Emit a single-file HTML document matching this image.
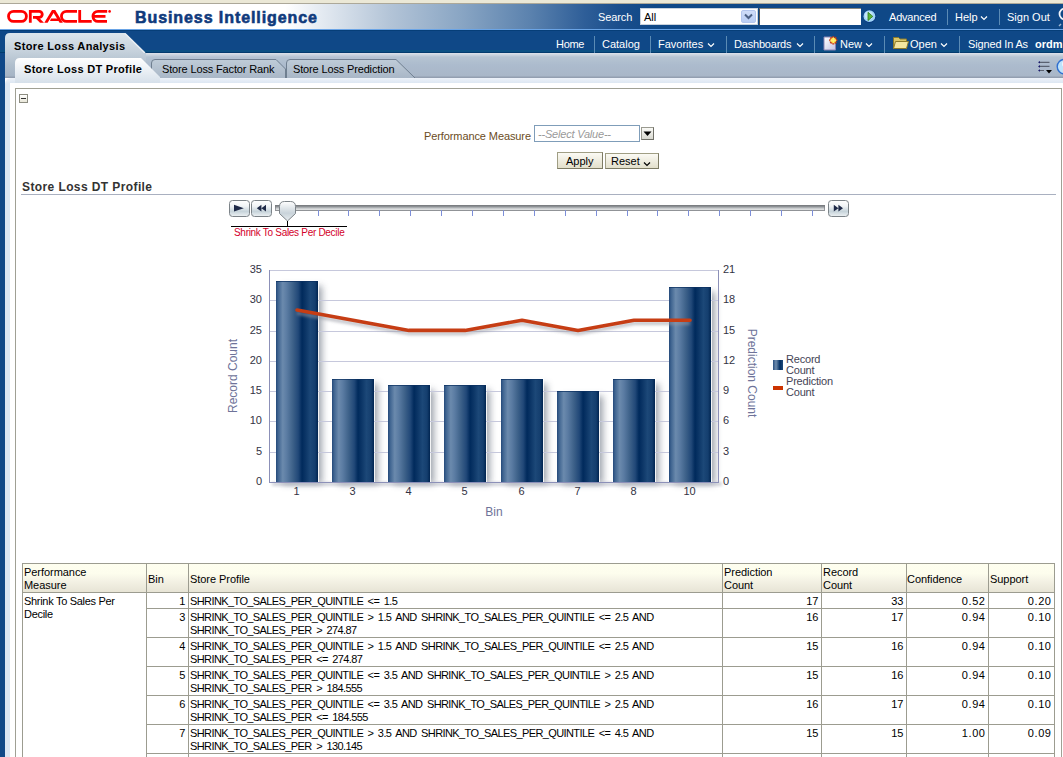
<!DOCTYPE html>
<html><head><meta charset="utf-8">
<style>
*{margin:0;padding:0;box-sizing:border-box}
html,body{width:1063px;height:757px;overflow:hidden;background:#fff;font-family:"Liberation Sans",sans-serif;font-size:11px;color:#000}
.a{position:absolute}
.wt{color:#fff;white-space:nowrap}
.t{line-height:13px;white-space:nowrap;letter-spacing:-0.3px}
.c{letter-spacing:-0.6px;word-spacing:2px}
.r{text-align:right}
#topstrip{left:0;top:0;width:1063px;height:3px;background:#ebe8d6}
#topline{left:0;top:3px;width:1063px;height:1px;background:#aca899}
#hdr{left:0;top:4px;width:1063px;height:25px;background:linear-gradient(90deg,#fff 0,#fff 285px,#e5ebf2 320px,#b3c4d7 390px,#8aa6c4 460px,#5b82ae 530px,#2e5e98 585px,#1a4e8c 620px,#0f4887 655px,#0f4887 100%)}
#bi{left:135px;top:8.5px;font-size:16px;font-weight:bold;color:#0f3a7c;letter-spacing:0.92px;white-space:nowrap;-webkit-text-stroke:0.6px #0f3a7c}
#nav{left:0;top:29px;width:1063px;height:24px;background:#0f4887;border-top:1px solid #6aa4e6}
#nav2{left:0;top:30px;width:1063px;height:1px;background:#063e78}
#nav3{left:0;top:50px;width:1063px;height:2px;background:#0b5083}
#nav4{left:0;top:52px;width:1063px;height:1px;background:#023c6e}
#tabbar{left:5px;top:53px;width:1058px;height:25px;background:linear-gradient(#dde3ea 0,#b5c4d2 4px,#acbbcd 12px,#a9b7c8 23px,#939fb0 24px)}
#tabbarL{left:5px;top:53px;width:141px;height:25px;background:linear-gradient(#c3cfda 0,#b0bfcd 12px,#a5b4c5 23px,#939fb0 24px)}
#leftblue{left:0;top:53px;width:5px;height:704px;background:#0f4887}
#strip{left:5px;top:78px;width:1058px;height:679px;background:linear-gradient(#edf2f9 0,#dde7f2 5px,#dae6f3 6px);border-top-left-radius:6px}
#white{left:10px;top:83px;width:1053px;height:674px;background:#fff}
#frame{left:15px;top:88px;width:1047px;height:680px;border:1px solid #a0a094}
</style></head><body>
<div class="a" id="topstrip"></div>
<div class="a" id="topline"></div>
<div class="a" id="hdr"></div>
<svg class="a" style="left:0;top:0" width="120" height="30" viewBox="0 0 120 30">
<g fill="none" stroke="#f00" stroke-width="2.8">
<rect x="8.5" y="11.3" width="17.9" height="10.1" rx="5.05"/>
<path d="M30.3 22.8V11.3H39.2A3.05 3.05 0 0 1 39.2 17.4H33"/>
<path d="M66.5 11.3H77M77 21.4H66.5A5.05 5.05 0 0 1 66.5 11.3"/>
<path d="M79.7 10V21.4H91.7"/>
<path d="M98 11.3H107.2M107 21.4H98A5.05 5.05 0 0 1 98 11.3M94 16.4H105.5"/>
</g>
<g fill="#f00">
<path d="M33.5 16.2L37.5 16.2L44 22.8L40 22.8Z"/>
<path d="M52 10L55.2 10L62.9 22.8L59.6 22.8L53.6 13L47.6 22.8L44.3 22.8Z"/>
<path d="M51 18.5L58 18.5L59.5 21L50 21Z"/>
<circle cx="109.6" cy="11.4" r="1.3"/>
</g>
</svg>
<div class="a" id="bi">Business Intelligence</div>
<div class="a" id="nav"></div>
<div class="a" id="nav2"></div>
<div class="a" id="nav3"></div>
<div class="a" id="nav4"></div>
<div class="a" id="tabbar"></div>
<div class="a" id="tabbarL"></div>
<div class="a" id="leftblue"></div>
<div class="a" id="strip"></div>
<div class="a" id="white"></div>
<div class="a" id="frame"></div>
<div class="a wt" style="left:598px;top:11px;letter-spacing:-0.1px">Search</div>
<div class="a" style="left:640px;top:8px;width:118px;height:17px;background:#fff;border:1px solid #c9d2dc"></div>
<div class="a" style="left:644px;top:11px;white-space:nowrap">All</div>
<div class="a" style="left:741px;top:10px;width:15px;height:13px;background:linear-gradient(#d0ddf8,#b9cdf4);border:1px solid #b4c6ee;border-radius:2px"></div>
<svg class="a" style="left:741px;top:10px" width="15" height="13"><path d="M4 4.5L7.5 8L11 4.5" fill="none" stroke="#4d6185" stroke-width="2"/></svg>
<div class="a" style="left:759px;top:8px;width:102px;height:17px;background:#fff;border-left:1px solid #555;border-top:1px solid #8a8a80"></div>
<svg class="a" style="left:862px;top:9px" width="16" height="16"><circle cx="7.6" cy="7.4" r="6.6" fill="#0a3a80"/><circle cx="7.4" cy="7.2" r="5.9" fill="#9fd3f7"/><circle cx="6.8" cy="6.4" r="4" fill="#c4e6fb"/><path d="M6 3.3L10.8 7.4L6 11.5Z" fill="#5cb83a" stroke="#2f7a1a" stroke-width="0.8" stroke-linejoin="round"/></svg>
<div class="a wt" style="left:889px;top:11px;letter-spacing:-0.2px">Advanced</div>
<div class="a" style="left:947px;top:9px;width:1px;height:16px;background:#5b8bb5"></div>
<div class="a wt" style="left:955px;top:11px">Help</div>
<svg class="a" style="left:980px;top:15px" width="8" height="6"><path d="M1 1.5L4 4.5L7 1.5" fill="none" stroke="#fff" stroke-width="1.2"/></svg>
<div class="a" style="left:999px;top:9px;width:1px;height:16px;background:#5b8bb5"></div>
<div class="a wt" style="left:1007px;top:11px">Sign Out</div>
<svg class="a" style="left:1058px;top:7px" width="5" height="20"><circle cx="7" cy="7" r="5.5" fill="none" stroke="#f0f4fa" stroke-width="1.8"/><path d="M3 17L1 19" stroke="#9fb6d0" stroke-width="1.5"/></svg>
<div class="a" style="left:5px;top:33px;width:141px;height:20px">
<svg width="141" height="20" style="position:absolute;left:0;top:0">
<defs><linearGradient id="tg1" x1="0" y1="0" x2="0" y2="1"><stop offset="0" stop-color="#dde6ed"/><stop offset="1" stop-color="#c3cfda"/></linearGradient></defs>
<path d="M0 20V5Q0 0 5 0H120L140 20Z" fill="url(#tg1)"/>
<path d="M120 0.5L140 20" stroke="#e9eef3" stroke-width="1.5" fill="none"/>
</svg>
<div class="a" style="left:9px;top:7px;font-weight:bold;letter-spacing:0.35px;white-space:nowrap;color:#000">Store Loss Analysis</div>
</div>
<div class="a wt" style="left:556px;top:38px;letter-spacing:-0.3px">Home</div>
<div class="a" style="left:594px;top:36px;width:1px;height:17px;background:#5b8bb5"></div>
<div class="a wt" style="left:602px;top:38px">Catalog</div>
<div class="a" style="left:650px;top:36px;width:1px;height:17px;background:#5b8bb5"></div>
<div class="a wt" style="left:658px;top:38px">Favorites</div>
<svg class="a" style="left:707px;top:42px" width="8" height="6"><path d="M1 1.5L4 4.5L7 1.5" fill="none" stroke="#fff" stroke-width="1.2"/></svg>
<div class="a" style="left:726px;top:36px;width:1px;height:17px;background:#5b8bb5"></div>
<div class="a wt" style="left:734px;top:38px;letter-spacing:-0.2px">Dashboards</div>
<svg class="a" style="left:796px;top:42px" width="8" height="6"><path d="M1 1.5L4 4.5L7 1.5" fill="none" stroke="#fff" stroke-width="1.2"/></svg>
<div class="a" style="left:814px;top:36px;width:1px;height:17px;background:#5b8bb5"></div>
<svg class="a" style="left:822px;top:34px" width="18" height="17"><defs><linearGradient id="npg" x1="0" y1="0" x2="1" y2="1"><stop offset="0" stop-color="#ffffff"/><stop offset="1" stop-color="#c4c4e4"/></linearGradient></defs><path d="M2 3H9.5L13.5 7V16H2Z" fill="url(#npg)" stroke="#8a84b4"/><path d="M11.3 2.2V10.4M7.2 6.3H15.4M8.4 3.4L14.2 9.2M14.2 3.4L8.4 9.2" stroke="#c83a10" stroke-width="2"/><circle cx="11.3" cy="6.3" r="2.6" fill="#ffe34a"/><path d="M11.3 3.3V9.3M8.3 6.3H14.3" stroke="#fff27a" stroke-width="1"/></svg>
<div class="a wt" style="left:840px;top:38px">New</div>
<svg class="a" style="left:865px;top:42px" width="8" height="6"><path d="M1 1.5L4 4.5L7 1.5" fill="none" stroke="#fff" stroke-width="1.2"/></svg>
<div class="a" style="left:884px;top:36px;width:1px;height:17px;background:#5b8bb5"></div>
<svg class="a" style="left:892px;top:35px" width="18" height="15"><path d="M1.5 2.5H6.5L8 4H14.5V13.5H1.5Z" fill="#d9c66a" stroke="#8c7a2a"/><path d="M3.5 6.5H16.5L14.5 13.5H1.5Z" fill="#f3e5a0" stroke="#8c7a2a"/></svg>
<div class="a wt" style="left:910px;top:38px">Open</div>
<svg class="a" style="left:940px;top:42px" width="8" height="6"><path d="M1 1.5L4 4.5L7 1.5" fill="none" stroke="#fff" stroke-width="1.2"/></svg>
<div class="a" style="left:959px;top:36px;width:1px;height:17px;background:#5b8bb5"></div>
<div class="a wt" style="left:968px;top:38px;letter-spacing:-0.15px">Signed In As</div>
<div class="a wt" style="left:1035px;top:38px;font-weight:bold">ordm</div>
<svg class="a" style="left:150px;top:58px" width="270" height="20">
<defs><linearGradient id="tg2" x1="0" y1="0" x2="0" y2="1"><stop offset="0" stop-color="#bfccd8"/><stop offset="1" stop-color="#a9b7c7"/></linearGradient></defs>
<path d="M1.5 20V5Q1.5 1.5 5 1.5H126L135.5 11V20" fill="url(#tg2)" stroke="#6f7f90" stroke-width="1"/>
<path d="M136.5 20V5Q136.5 1.5 140 1.5H246L265 20" fill="url(#tg2)" stroke="#6f7f90" stroke-width="1"/>
</svg>
<svg class="a" style="left:15px;top:58px" width="150" height="25">
<defs><linearGradient id="tg3" x1="0" y1="0" x2="0" y2="1"><stop offset="0" stop-color="#ffffff"/><stop offset="1" stop-color="#d6e0ea"/></linearGradient></defs>
<path d="M0 25V5Q0 0 5 0H126L145 19V25Z" fill="url(#tg3)"/>
</svg>
<svg class="a" style="left:1036px;top:59px" width="18" height="17"><g fill="#1a1a6a"><path d="M2 3.3L4 2V4.6Z"/><path d="M2 7.4L4 6.1V8.7Z"/><path d="M2 11.5L4 10.2V12.8Z"/></g><g stroke="#5a6270" stroke-width="1.2"><path d="M4 3.3H13.5M4 7.4H13.5M4 11.5H8"/></g><path d="M10 11H16L13 14.5Z" fill="#000"/></svg>
<svg class="a" style="left:1056px;top:58px" width="7" height="18"><circle cx="8.5" cy="8.6" r="7.3" fill="#bfe3fb" stroke="#2f6fd0" stroke-width="1.4"/><circle cx="9" cy="6" r="3" fill="#eef8ff"/></svg>
<div class="a" style="left:24px;top:63px;font-weight:bold;letter-spacing:0.3px;white-space:nowrap">Store Loss DT Profile</div>
<div class="a" style="left:162px;top:63px;letter-spacing:-0.15px;white-space:nowrap">Store Loss Factor Rank</div>
<div class="a" style="left:293px;top:63px;letter-spacing:-0.15px;white-space:nowrap">Store Loss Prediction</div>
<div class="a" style="left:19px;top:94px;width:9px;height:9px;border:1px solid #8c8c80;background:linear-gradient(#fff,#e8e6d8)"></div>
<div class="a" style="left:21px;top:98px;width:5px;height:1px;background:#333"></div>
<div class="a" style="left:424px;top:130px;color:#6b4c1e;letter-spacing:-0.1px;white-space:nowrap">Performance Measure</div>
<div class="a" style="left:534px;top:125px;width:106px;height:17px;border:1px solid #7f9db9;background:#fff"></div>
<div class="a" style="left:538px;top:128px;color:#9a9a9a;font-style:italic;letter-spacing:-0.2px;white-space:nowrap">--Select Value--</div>
<div class="a" style="left:641px;top:127px;width:13px;height:13px;border:1px solid #9a9a90;border-right-color:#707068;border-bottom-color:#707068;background:linear-gradient(#fafaf6,#d8d8d0)"></div>
<svg class="a" style="left:641px;top:127px" width="13" height="13"><path d="M2.5 4.5H10.5L6.5 9Z" fill="#000"/></svg>
<div class="a" style="left:557px;top:152px;width:46px;height:17px;border:1px solid #a09e84;border-right-color:#7d7b64;border-bottom-color:#7d7b64;background:linear-gradient(#fbfaf4,#e2dfcb)"></div>
<div class="a" style="left:566px;top:155px;white-space:nowrap">Apply</div>
<div class="a" style="left:605px;top:153px;width:54px;height:16px;border:1px solid #a09e84;border-right-color:#7d7b64;border-bottom-color:#7d7b64;background:linear-gradient(#fbfaf4,#e2dfcb)"></div>
<div class="a" style="left:611px;top:155px;white-space:nowrap">Reset</div>
<svg class="a" style="left:643px;top:161px" width="8" height="6"><path d="M1 1.5L4 4.5L7 1.5" fill="none" stroke="#000" stroke-width="1.2"/></svg>
<div class="a" style="left:22px;top:180px;font-size:12px;font-weight:bold;color:#333;letter-spacing:0.4px;white-space:nowrap">Store Loss DT Profile</div>
<div class="a" style="left:21px;top:194px;width:1035px;height:1px;background:#a9b0c0"></div>
<svg class="a" style="left:220px;top:196px" width="640" height="48">
<defs>
<linearGradient id="btn" x1="0" y1="0" x2="0" y2="1"><stop offset="0" stop-color="#ffffff"/><stop offset="0.35" stop-color="#f1f4f6"/><stop offset="0.68" stop-color="#c6d3da"/><stop offset="1" stop-color="#eef2f4"/></linearGradient>
<linearGradient id="trk" x1="0" y1="0" x2="0" y2="1"><stop offset="0" stop-color="#6e7276"/><stop offset="0.25" stop-color="#8c9094"/><stop offset="0.6" stop-color="#cdd0d2"/><stop offset="0.85" stop-color="#e6e7e8"/><stop offset="1" stop-color="#9a9ea2"/></linearGradient>
<linearGradient id="thm" x1="0" y1="0" x2="0" y2="1"><stop offset="0" stop-color="#ffffff"/><stop offset="0.6" stop-color="#c9d3da"/><stop offset="1" stop-color="#e8edf0"/></linearGradient>
</defs>
<rect x="9.5" y="4.5" width="20" height="16" rx="3" fill="url(#btn)" stroke="#7c8388"/>
<path d="M14 8.8L23.8 12.2L14 15.4Z" fill="#1f2a48"/>
<rect x="31.5" y="4.5" width="20" height="16" rx="3" fill="url(#btn)" stroke="#7c8388"/>
<path d="M36.8 12.2L41.4 8.8V15.4Z M41.4 12.2L46 8.8V15.4Z" fill="#1f2a48"/>
<rect x="55" y="9" width="550" height="6" fill="url(#trk)"/>
<rect x="55.5" y="9.5" width="549" height="5" fill="none" stroke="#7a7e82" stroke-width="1" opacity="0.7"/>
<rect x="98" y="14" width="1" height="6" fill="#7d8fd8"/><rect x="128" y="14" width="1" height="6" fill="#7d8fd8"/><rect x="159" y="14" width="1" height="6" fill="#7d8fd8"/><rect x="190" y="14" width="1" height="6" fill="#7d8fd8"/><rect x="221" y="14" width="1" height="6" fill="#7d8fd8"/><rect x="252" y="14" width="1" height="6" fill="#7d8fd8"/><rect x="283" y="14" width="1" height="6" fill="#7d8fd8"/><rect x="314" y="14" width="1" height="6" fill="#7d8fd8"/><rect x="345" y="14" width="1" height="6" fill="#7d8fd8"/><rect x="376" y="14" width="1" height="6" fill="#7d8fd8"/><rect x="407" y="14" width="1" height="6" fill="#7d8fd8"/><rect x="437" y="14" width="1" height="6" fill="#7d8fd8"/><rect x="468" y="14" width="1" height="6" fill="#7d8fd8"/><rect x="499" y="14" width="1" height="6" fill="#7d8fd8"/><rect x="530" y="14" width="1" height="6" fill="#7d8fd8"/><rect x="561" y="14" width="1" height="6" fill="#7d8fd8"/><rect x="592" y="14" width="1" height="6" fill="#7d8fd8"/>
<path d="M59.5 10.5Q59.5 5.5 64.5 5.5H70.5Q75.5 5.5 75.5 10.5V17.5L67.5 25L59.5 17.5Z" fill="url(#thm)" stroke="#7c8388"/>
<rect x="67" y="25" width="1" height="5" fill="#000"/>
<rect x="11" y="30" width="116" height="1" fill="#000"/>
<rect x="608.5" y="4.5" width="20" height="16" rx="3" fill="url(#btn)" stroke="#7c8388"/>
<path d="M613.8 8.8L618.4 12.2L613.8 15.4Z M618.4 8.8L623 12.2L618.4 15.4Z" fill="#1f2a48"/>
</svg>
<div class="a" style="left:234px;top:227px;font-size:10px;color:#d4002a;letter-spacing:-0.3px;white-space:nowrap">Shrink To Sales Per Decile</div>
<div class="a" style="left:22px;top:563px;width:1033px;height:30px;background:linear-gradient(#fefeef 0,#fdfded 35%,#f3f1e4 62%,#e6e3d4 100%)"></div>
<div class="a" style="left:22px;top:563px;width:1033px;height:1px;background:#9c9c90"></div>
<div class="a" style="left:22px;top:592px;width:1033px;height:1px;background:#9c9c90"></div>
<div class="a" style="left:146px;top:608px;width:909px;height:1px;background:#9c9c90"></div>
<div class="a" style="left:146px;top:637px;width:909px;height:1px;background:#9c9c90"></div>
<div class="a" style="left:146px;top:666px;width:909px;height:1px;background:#9c9c90"></div>
<div class="a" style="left:146px;top:695px;width:909px;height:1px;background:#9c9c90"></div>
<div class="a" style="left:146px;top:724px;width:909px;height:1px;background:#9c9c90"></div>
<div class="a" style="left:146px;top:753px;width:909px;height:1px;background:#9c9c90"></div>
<div class="a" style="left:22px;top:563px;width:1px;height:194px;background:#9c9c90"></div>
<div class="a" style="left:146px;top:563px;width:1px;height:194px;background:#9c9c90"></div>
<div class="a" style="left:188px;top:563px;width:1px;height:194px;background:#9c9c90"></div>
<div class="a" style="left:722px;top:563px;width:1px;height:194px;background:#9c9c90"></div>
<div class="a" style="left:821px;top:563px;width:1px;height:194px;background:#9c9c90"></div>
<div class="a" style="left:906px;top:563px;width:1px;height:194px;background:#9c9c90"></div>
<div class="a" style="left:988px;top:563px;width:1px;height:194px;background:#9c9c90"></div>
<div class="a" style="left:1054px;top:563px;width:1px;height:194px;background:#9c9c90"></div>
<div class="a t" style="left:24px;top:566px;letter-spacing:-0.05px">Performance<br>Measure</div>
<div class="a t" style="left:148px;top:573px;letter-spacing:-0.05px">Bin</div>
<div class="a t" style="left:190px;top:573px;letter-spacing:-0.05px">Store Profile</div>
<div class="a t" style="left:724px;top:566px;letter-spacing:-0.05px">Prediction<br>Count</div>
<div class="a t" style="left:823px;top:566px;letter-spacing:-0.05px">Record<br>Count</div>
<div class="a t" style="left:907px;top:573px;letter-spacing:-0.05px">Confidence</div>
<div class="a t" style="left:990px;top:573px;letter-spacing:-0.05px">Support</div>
<div class="a t" style="left:24px;top:595px">Shrink To Sales Per<br>Decile</div>
<div class="a t c" style="left:190px;top:595px">SHRINK_TO_SALES_PER_QUINTILE &lt;= 1.5</div>
<div class="a t r" style="right:878px;top:595px;">1</div>
<div class="a t r" style="right:245px;top:595px;">17</div>
<div class="a t r" style="right:160px;top:595px;">33</div>
<div class="a t r" style="right:78px;top:595px;letter-spacing:0.6px;margin-right:-0.6px;">0.52</div>
<div class="a t r" style="right:12px;top:595px;letter-spacing:0.6px;margin-right:-0.6px;">0.20</div>
<div class="a t c" style="left:190px;top:611px">SHRINK_TO_SALES_PER_QUINTILE &gt; 1.5 AND SHRINK_TO_SALES_PER_QUINTILE &lt;= 2.5 AND<br>SHRINK_TO_SALES_PER &gt; 274.87</div>
<div class="a t r" style="right:878px;top:611px;">3</div>
<div class="a t r" style="right:245px;top:611px;">16</div>
<div class="a t r" style="right:160px;top:611px;">17</div>
<div class="a t r" style="right:78px;top:611px;letter-spacing:0.6px;margin-right:-0.6px;">0.94</div>
<div class="a t r" style="right:12px;top:611px;letter-spacing:0.6px;margin-right:-0.6px;">0.10</div>
<div class="a t c" style="left:190px;top:640px">SHRINK_TO_SALES_PER_QUINTILE &gt; 1.5 AND SHRINK_TO_SALES_PER_QUINTILE &lt;= 2.5 AND<br>SHRINK_TO_SALES_PER &lt;= 274.87</div>
<div class="a t r" style="right:878px;top:640px;">4</div>
<div class="a t r" style="right:245px;top:640px;">15</div>
<div class="a t r" style="right:160px;top:640px;">16</div>
<div class="a t r" style="right:78px;top:640px;letter-spacing:0.6px;margin-right:-0.6px;">0.94</div>
<div class="a t r" style="right:12px;top:640px;letter-spacing:0.6px;margin-right:-0.6px;">0.10</div>
<div class="a t c" style="left:190px;top:669px">SHRINK_TO_SALES_PER_QUINTILE &lt;= 3.5 AND SHRINK_TO_SALES_PER_QUINTILE &gt; 2.5 AND<br>SHRINK_TO_SALES_PER &gt; 184.555</div>
<div class="a t r" style="right:878px;top:669px;">5</div>
<div class="a t r" style="right:245px;top:669px;">15</div>
<div class="a t r" style="right:160px;top:669px;">16</div>
<div class="a t r" style="right:78px;top:669px;letter-spacing:0.6px;margin-right:-0.6px;">0.94</div>
<div class="a t r" style="right:12px;top:669px;letter-spacing:0.6px;margin-right:-0.6px;">0.10</div>
<div class="a t c" style="left:190px;top:698px">SHRINK_TO_SALES_PER_QUINTILE &lt;= 3.5 AND SHRINK_TO_SALES_PER_QUINTILE &gt; 2.5 AND<br>SHRINK_TO_SALES_PER &lt;= 184.555</div>
<div class="a t r" style="right:878px;top:698px;">6</div>
<div class="a t r" style="right:245px;top:698px;">16</div>
<div class="a t r" style="right:160px;top:698px;">17</div>
<div class="a t r" style="right:78px;top:698px;letter-spacing:0.6px;margin-right:-0.6px;">0.94</div>
<div class="a t r" style="right:12px;top:698px;letter-spacing:0.6px;margin-right:-0.6px;">0.10</div>
<div class="a t c" style="left:190px;top:727px">SHRINK_TO_SALES_PER_QUINTILE &gt; 3.5 AND SHRINK_TO_SALES_PER_QUINTILE &lt;= 4.5 AND<br>SHRINK_TO_SALES_PER &gt; 130.145</div>
<div class="a t r" style="right:878px;top:727px;">7</div>
<div class="a t r" style="right:245px;top:727px;">15</div>
<div class="a t r" style="right:160px;top:727px;">15</div>
<div class="a t r" style="right:78px;top:727px;letter-spacing:0.6px;margin-right:-0.6px;">1.00</div>
<div class="a t r" style="right:12px;top:727px;letter-spacing:0.6px;margin-right:-0.6px;">0.09</div>
<svg class="a" style="left:0;top:0" width="1063" height="757" viewBox="0 0 1063 757">
<defs>
<linearGradient id="bar" x1="0" y1="0" x2="1" y2="0">
<stop offset="0" stop-color="#24497a"/>
<stop offset="0.05" stop-color="#3f6490"/>
<stop offset="0.16" stop-color="#6b8aad"/>
<stop offset="0.26" stop-color="#5a7ba2"/>
<stop offset="0.40" stop-color="#3d6189"/>
<stop offset="0.53" stop-color="#214878"/>
<stop offset="0.62" stop-color="#002a5c"/>
<stop offset="0.70" stop-color="#0b3566"/>
<stop offset="0.82" stop-color="#1c4878"/>
<stop offset="0.93" stop-color="#143e6e"/>
<stop offset="1" stop-color="#002450"/>
</linearGradient>
<linearGradient id="legbar" x1="0" y1="0" x2="1" y2="0">
<stop offset="0" stop-color="#2a5080"/>
<stop offset="0.3" stop-color="#6f8dae"/>
<stop offset="0.7" stop-color="#002c60"/>
<stop offset="1" stop-color="#1e4a7a"/>
</linearGradient>
<filter id="sh" x="-50%" y="-20%" width="200%" height="140%"><feGaussianBlur stdDeviation="3.5"/></filter>
<filter id="lsh" x="-10%" y="-50%" width="120%" height="200%"><feGaussianBlur stdDeviation="1.5"/></filter>
</defs>
<rect x="282" y="286" width="40" height="198" fill="#989ea7" opacity="0.95" filter="url(#sh)"/>
<rect x="338" y="384" width="40" height="100" fill="#989ea7" opacity="0.95" filter="url(#sh)"/>
<rect x="394" y="390" width="40" height="94" fill="#989ea7" opacity="0.95" filter="url(#sh)"/>
<rect x="450" y="390" width="40" height="94" fill="#989ea7" opacity="0.95" filter="url(#sh)"/>
<rect x="507" y="384" width="40" height="100" fill="#989ea7" opacity="0.95" filter="url(#sh)"/>
<rect x="563" y="396" width="40" height="88" fill="#989ea7" opacity="0.95" filter="url(#sh)"/>
<rect x="619" y="384" width="40" height="100" fill="#989ea7" opacity="0.95" filter="url(#sh)"/>
<rect x="675" y="292" width="40" height="192" fill="#989ea7" opacity="0.95" filter="url(#sh)"/>
<rect x="272" y="482" width="450" height="4" fill="#b0b4c0" opacity="0.55" filter="url(#lsh)"/>
<rect x="275" y="280" width="44" height="202" fill="#fff" opacity="0.85"/>
<rect x="331" y="378" width="44" height="104" fill="#fff" opacity="0.85"/>
<rect x="387" y="384" width="44" height="98" fill="#fff" opacity="0.85"/>
<rect x="443" y="384" width="44" height="98" fill="#fff" opacity="0.85"/>
<rect x="500" y="378" width="44" height="104" fill="#fff" opacity="0.85"/>
<rect x="556" y="390" width="44" height="92" fill="#fff" opacity="0.85"/>
<rect x="612" y="378" width="44" height="104" fill="#fff" opacity="0.85"/>
<rect x="668" y="286" width="44" height="196" fill="#fff" opacity="0.85"/>
<rect x="269" y="270" width="450" height="1" fill="#c6c8dc"/>
<rect x="269" y="300" width="450" height="1" fill="#c6c8dc"/>
<rect x="269" y="331" width="450" height="1" fill="#c6c8dc"/>
<rect x="269" y="361" width="450" height="1" fill="#c6c8dc"/>
<rect x="269" y="391" width="450" height="1" fill="#c6c8dc"/>
<rect x="269" y="421" width="450" height="1" fill="#c6c8dc"/>
<rect x="269" y="452" width="450" height="1" fill="#c6c8dc"/>
<rect x="276" y="281" width="42" height="201" fill="url(#bar)"/>
<rect x="276" y="281" width="42" height="1" fill="#0a2f5f" opacity="0.7"/>
<rect x="332" y="379" width="42" height="103" fill="url(#bar)"/>
<rect x="332" y="379" width="42" height="1" fill="#0a2f5f" opacity="0.7"/>
<rect x="388" y="385" width="42" height="97" fill="url(#bar)"/>
<rect x="388" y="385" width="42" height="1" fill="#0a2f5f" opacity="0.7"/>
<rect x="444" y="385" width="42" height="97" fill="url(#bar)"/>
<rect x="444" y="385" width="42" height="1" fill="#0a2f5f" opacity="0.7"/>
<rect x="501" y="379" width="42" height="103" fill="url(#bar)"/>
<rect x="501" y="379" width="42" height="1" fill="#0a2f5f" opacity="0.7"/>
<rect x="557" y="391" width="42" height="91" fill="url(#bar)"/>
<rect x="557" y="391" width="42" height="1" fill="#0a2f5f" opacity="0.7"/>
<rect x="613" y="379" width="42" height="103" fill="url(#bar)"/>
<rect x="613" y="379" width="42" height="1" fill="#0a2f5f" opacity="0.7"/>
<rect x="669" y="287" width="42" height="195" fill="url(#bar)"/>
<rect x="669" y="287" width="42" height="1" fill="#0a2f5f" opacity="0.7"/>
<rect x="269" y="270" width="1" height="213" fill="#8c90b8"/>
<rect x="718" y="270" width="1" height="213" fill="#8c90b8"/>
<rect x="269" y="482" width="450" height="1" fill="#8c90b8"/>
<polyline points="297,310.1 353,320.2 409,330.4 465,330.4 522,320.2 578,330.4 634,320.2 690,320.2" transform="translate(0,3)" fill="none" stroke="#9a9ca6" stroke-width="3.5" opacity="0.6" filter="url(#lsh)"/>
<polyline points="297,310.1 353,320.2 409,330.4 465,330.4 522,320.2 578,330.4 634,320.2 690,320.2" fill="none" stroke="#c63d14" stroke-width="3.6" stroke-linecap="round" stroke-linejoin="round"/>
<text x="262" y="273" text-anchor="end" font-size="11" fill="#333344" font-family="Liberation Sans">35</text>
<text x="723" y="273" font-size="11" fill="#333344" font-family="Liberation Sans">21</text>
<text x="262" y="303" text-anchor="end" font-size="11" fill="#333344" font-family="Liberation Sans">30</text>
<text x="723" y="303" font-size="11" fill="#333344" font-family="Liberation Sans">18</text>
<text x="262" y="334" text-anchor="end" font-size="11" fill="#333344" font-family="Liberation Sans">25</text>
<text x="723" y="334" font-size="11" fill="#333344" font-family="Liberation Sans">15</text>
<text x="262" y="364" text-anchor="end" font-size="11" fill="#333344" font-family="Liberation Sans">20</text>
<text x="723" y="364" font-size="11" fill="#333344" font-family="Liberation Sans">12</text>
<text x="262" y="394" text-anchor="end" font-size="11" fill="#333344" font-family="Liberation Sans">15</text>
<text x="723" y="394" font-size="11" fill="#333344" font-family="Liberation Sans">9</text>
<text x="262" y="424" text-anchor="end" font-size="11" fill="#333344" font-family="Liberation Sans">10</text>
<text x="723" y="424" font-size="11" fill="#333344" font-family="Liberation Sans">6</text>
<text x="262" y="455" text-anchor="end" font-size="11" fill="#333344" font-family="Liberation Sans">5</text>
<text x="723" y="455" font-size="11" fill="#333344" font-family="Liberation Sans">3</text>
<text x="262" y="485" text-anchor="end" font-size="11" fill="#333344" font-family="Liberation Sans">0</text>
<text x="723" y="485" font-size="11" fill="#333344" font-family="Liberation Sans">0</text>
<text x="296.5" y="495" text-anchor="middle" font-size="11" fill="#333344" font-family="Liberation Sans">1</text>
<text x="352.5" y="495" text-anchor="middle" font-size="11" fill="#333344" font-family="Liberation Sans">3</text>
<text x="408.5" y="495" text-anchor="middle" font-size="11" fill="#333344" font-family="Liberation Sans">4</text>
<text x="464.5" y="495" text-anchor="middle" font-size="11" fill="#333344" font-family="Liberation Sans">5</text>
<text x="521.5" y="495" text-anchor="middle" font-size="11" fill="#333344" font-family="Liberation Sans">6</text>
<text x="577.5" y="495" text-anchor="middle" font-size="11" fill="#333344" font-family="Liberation Sans">7</text>
<text x="633.5" y="495" text-anchor="middle" font-size="11" fill="#333344" font-family="Liberation Sans">8</text>
<text x="689.5" y="495" text-anchor="middle" font-size="11" fill="#333344" font-family="Liberation Sans">10</text>
<text x="494" y="516" text-anchor="middle" font-size="12" fill="#6e7399" font-family="Liberation Sans">Bin</text>
<text transform="translate(237,376) rotate(-90)" text-anchor="middle" font-size="12" fill="#6e7399" font-family="Liberation Sans">Record Count</text>
<text transform="translate(748,373) rotate(90)" text-anchor="middle" font-size="12" fill="#6e7399" font-family="Liberation Sans">Prediction Count</text>
<rect x="773" y="360" width="10" height="10" fill="url(#legbar)"/>
<rect x="773" y="386" width="10" height="4" fill="#cc3300"/>
<text x="786" y="363" font-size="11" fill="#444455" font-family="Liberation Sans" letter-spacing="-0.2">Record</text>
<text x="786" y="374" font-size="11" fill="#444455" font-family="Liberation Sans" letter-spacing="-0.2">Count</text>
<text x="786" y="385" font-size="11" fill="#444455" font-family="Liberation Sans" letter-spacing="-0.2">Prediction</text>
<text x="786" y="396" font-size="11" fill="#444455" font-family="Liberation Sans" letter-spacing="-0.2">Count</text>
</svg>
</body></html>
